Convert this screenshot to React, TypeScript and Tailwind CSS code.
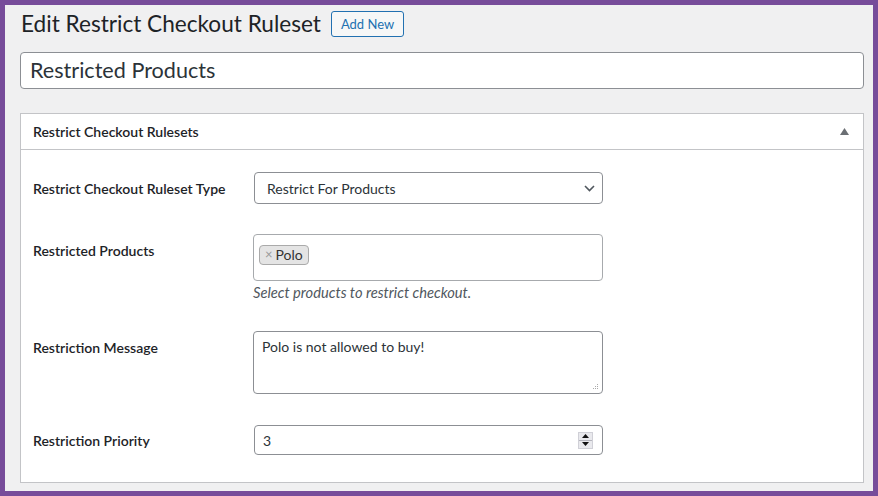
const font = { fontFamily: '"Segoe UI", Lato, "Noto Sans", sans-serif' };

function Row({ label, children }: { label: string; children: React.ReactNode }) {
  return (
    <div className="flex py-[15px]">
      <div className="w-[220px] shrink-0 pt-[8px] text-[14px] leading-[18px] font-semibold text-[#1d2327]">
        {label}
      </div>
      <div className="w-[350px]">{children}</div>
    </div>
  );
}

export default function App() {
  return (
    <div
      className="h-[496px] w-[878px] border-[5px] border-[#774c9a] bg-[#f0f0f1] text-[#2c3338]"
      style={font}
    >
      <div className="pl-[15px] pr-[9px] pt-[2px]">
        {/* heading */}
        <div className="flex items-center h-[34px]">
          <h1 className="text-[22.6px] leading-[30px] text-[#1d2327] pl-px">Edit Restrict Checkout Ruleset</h1>
          <button className="ml-[10px] h-[26px] px-[9px] rounded-[3px] border border-[#2271b1] bg-[#f6f7f7] text-[13px] text-[#2271b1] leading-none">
            Add New
          </button>
        </div>

        {/* title input */}
        <div className="mt-[11px] h-[37px] rounded-[4px] border border-[#8c8f94] bg-white flex items-center px-[9px] text-[21.6px] text-[#2c3338]">
          Restricted Products
        </div>

        {/* postbox */}
        <div className="mt-[24px] border border-[#c3c4c7] bg-white">
          <div className="h-[36px] border-b border-[#c3c4c7] flex items-center justify-between px-[12px]">
            <span className="text-[14px] font-semibold text-[#1d2327]">Restrict Checkout Rulesets</span>
            <svg width="9" height="7" viewBox="0 0 9 7" className="mr-[2px]">
              <path d="M4.5 0 L9 7 L0 7 Z" fill="#6b6f74" />
            </svg>
          </div>

          <div className="px-[12px] pt-[7px] pb-[12px]">
            <Row label="Restrict Checkout Ruleset Type">
              <div className="h-[32px] ml-px rounded-[4px] border border-[#8c8f94] flex items-center justify-between pl-[12px] pr-[7px] text-[14px] text-[#2c3338]">
                <span>Restrict For Products</span>
                <svg width="11" height="7" viewBox="0 0 11 7">
                  <path d="M1 1 L5.5 5.5 L10 1" fill="none" stroke="#50575e" strokeWidth="1.6" />
                </svg>
              </div>
            </Row>

            <Row label="Restricted Products">
              <div className="h-[47px] rounded-[4px] border border-[#a7aaad] pt-[6px] pl-[5px]">
                <span className="inline-flex items-center h-[20px] rounded-[4px] border border-[#aaaaaa] bg-[#e4e4e4] pl-[5px] pr-[5px] text-[14px] text-[#333]">
                  <span className="text-[#999] text-[13px] mr-[3px]">×</span>Polo
                </span>
              </div>
              <p className="mt-[2px] text-[14.7px] italic text-[#50575e] leading-[18px]">
                Select products to restrict checkout.
              </p>
            </Row>

            <Row label="Restriction Message">
              <div className="relative h-[63px] rounded-[4px] border border-[#8c8f94] px-[8px] pt-[4px] text-[14px] text-[#2c3338]">
                Polo is not allowed to buy!
                <svg width="7" height="7" viewBox="0 0 7 7" className="absolute right-[3px] bottom-[3px]">
                  <rect x="5" y="1" width="1" height="1" fill="#aaa" />
                  <rect x="3" y="3" width="1" height="1" fill="#aaa" />
                  <rect x="5" y="3" width="1" height="1" fill="#aaa" />
                  <rect x="1" y="5" width="1" height="1" fill="#aaa" />
                  <rect x="3" y="5" width="1" height="1" fill="#aaa" />
                  <rect x="5" y="5" width="1" height="1" fill="#aaa" />
                </svg>
              </div>
            </Row>

            <Row label="Restriction Priority">
              <div className="h-[30px] ml-px mt-[1px] rounded-[4px] border border-[#8c8f94] flex items-center justify-between pl-[8px] pr-[9px] text-[14px] text-[#2c3338]">
                <span>3</span>
                <div className="flex flex-col w-[15px] h-[17px] bg-[#e9e9ed] border border-[#d0d0d7]">
                  <div className="flex-1 flex items-center justify-center border-b border-[#b5b5bd]">
                    <svg width="7" height="4" viewBox="0 0 7 4"><path d="M3.5 0 L7 4 L0 4 Z" fill="#111" /></svg>
                  </div>
                  <div className="flex-1 flex items-center justify-center">
                    <svg width="7" height="4" viewBox="0 0 7 4"><path d="M0 0 L7 0 L3.5 4 Z" fill="#111" /></svg>
                  </div>
                </div>
              </div>
            </Row>
          </div>
        </div>
      </div>
    </div>
  );
}
